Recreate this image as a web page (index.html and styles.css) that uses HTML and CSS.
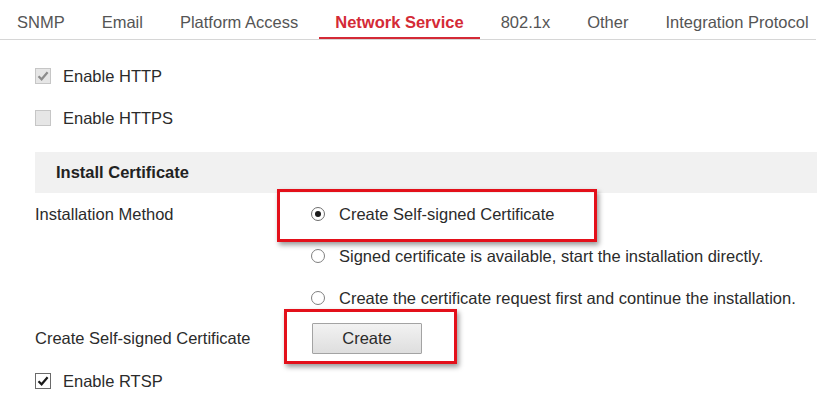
FILE: index.html
```html
<!DOCTYPE html>
<html lang="en">
<head>
<meta charset="utf-8">
<title>Network Service</title>
<link rel="stylesheet" href="styles.css">
</head>
<body>
<div class="page">
  <nav class="tabs">
    <span class="tab">SNMP</span>
    <span class="tab">Email</span>
    <span class="tab">Platform Access</span>
    <span class="tab active">Network Service</span>
    <span class="tab">802.1x</span>
    <span class="tab">Other</span>
    <span class="tab">Integration Protocol</span>
  </nav>

  <div class="content">
    <div class="check-row">
      <span class="cb cb-disabled"><svg viewBox="0 0 16 16" width="16" height="16"><path d="M3.5 8.2 L6.6 11.3 L12.6 4.2" fill="none" stroke="#8c8c8c" stroke-width="2.2"/></svg></span>
      <span class="cb-label">Enable HTTP</span>
    </div>
    <div class="check-row">
      <span class="cb cb-disabled"></span>
      <span class="cb-label">Enable HTTPS</span>
    </div>

    <div class="section-head">Install Certificate</div>

    <div class="field">
      <div class="label">Installation Method</div>
      <div class="options">
        <div class="option"><span class="radio checked"></span><span>Create Self-signed Certificate</span></div>
        <div class="option"><span class="radio"></span><span>Signed certificate is available, start the installation directly.</span></div>
        <div class="option"><span class="radio"></span><span>Create the certificate request first and continue the installation.</span></div>
      </div>
    </div>

    <div class="field field-btn">
      <div class="label">Create Self-signed Certificate</div>
      <div class="options"><button class="btn" type="button">Create</button></div>
    </div>

    <div class="check-row rtsp">
      <span class="cb cb-on"><svg viewBox="0 0 16 16" width="16" height="16"><path d="M3.5 8.2 L6.6 11.3 L12.6 4.2" fill="none" stroke="#1a1a1a" stroke-width="2.2"/></svg></span>
      <span class="cb-label">Enable RTSP</span>
    </div>
  </div>

  <div class="mark mark-radio"></div>
  <div class="mark mark-btn"></div>
</div>
</body>
</html>
```

FILE: styles.css
```css
html, body {
  margin: 0;
  padding: 0;
  background: #ffffff;
}

.page {
  position: relative;
  width: 830px;
  height: 417px;
  font-family: "Liberation Sans", Arial, sans-serif;
  font-size: 16.5px;
  color: #2b2b2b;
  overflow: hidden;
}

/* Tabs */
.tabs {
  display: flex;
  gap: 5px;
  width: 816px;
  padding-left: 1px;
  box-sizing: border-box;
  border-bottom: 1px solid #d6d6d6;
}

.tab {
  height: 39px;
  box-sizing: border-box;
  padding: 13px 16px 0;
  line-height: 19px;
  color: #555555;
  border-bottom: 2px solid transparent;
  white-space: nowrap;
}

.tab.active {
  color: #d42a36;
  font-weight: bold;
  border-bottom-color: #d42a36;
}

/* Content */
.content {
  padding: 15px 0 0 35px;
}

.check-row {
  display: flex;
  align-items: center;
  height: 42px;
}

.check-row.rtsp {
  margin-top: 3px;
}

.cb {
  width: 16px;
  height: 16px;
  box-sizing: border-box;
  display: inline-flex;
  align-items: center;
  justify-content: center;
  margin-right: 12px;
  flex: none;
}

.cb svg {
  display: block;
  margin: -1px;
}

.cb-disabled {
  background: #e6e6e6;
  border: 1px solid #c6c6c6;
}

.cb-on {
  background: #ffffff;
  border: 1px solid #6a6a6a;
}

.section-head {
  margin-top: 13px;
  width: 782px;
  height: 41px;
  line-height: 41px;
  padding-left: 21px;
  box-sizing: border-box;
  background: #f1f1f1;
  font-weight: bold;
  color: #222222;
}

.field {
  display: flex;
}

.label {
  width: 276px;
  flex: none;
  line-height: 42px;
  height: 42px;
}

.options {
  display: flex;
  flex-direction: column;
}

.option {
  display: flex;
  align-items: center;
  height: 42px;
  white-space: nowrap;
}

.radio {
  width: 14px;
  height: 14px;
  box-sizing: border-box;
  border: 1px solid #7f7f7f;
  border-radius: 50%;
  background: #ffffff;
  margin-right: 14px;
  flex: none;
  display: inline-flex;
  align-items: center;
  justify-content: center;
}

.radio.checked {
  border-color: #6e6e6e;
}

.radio.checked::after {
  content: "";
  width: 6px;
  height: 6px;
  border-radius: 50%;
  background: #1a1a1a;
}

.field-btn {
  align-items: center;
  height: 38px;
}

.field-btn .label {
  line-height: 38px;
  height: 38px;
}

.field-btn .options {
  padding-left: 1px;
}

.btn {
  width: 110px;
  height: 31px;
  font-family: "Liberation Sans", Arial, sans-serif;
  font-size: 16.5px;
  color: #2b2b2b;
  background: linear-gradient(#f2f2f2, #dedede);
  border: 1px solid #a3a3a3;
  border-radius: 1px;
  padding: 0;
}

/* Annotation boxes */
.mark {
  position: absolute;
  border: 3px solid #e3101a;
  box-shadow: 2px 3px 5px rgba(0, 0, 0, 0.4);
  box-sizing: border-box;
}

.mark-radio {
  left: 277px;
  top: 189px;
  width: 320px;
  height: 53px;
}

.mark-btn {
  left: 284px;
  top: 309px;
  width: 173px;
  height: 55px;
}
```
